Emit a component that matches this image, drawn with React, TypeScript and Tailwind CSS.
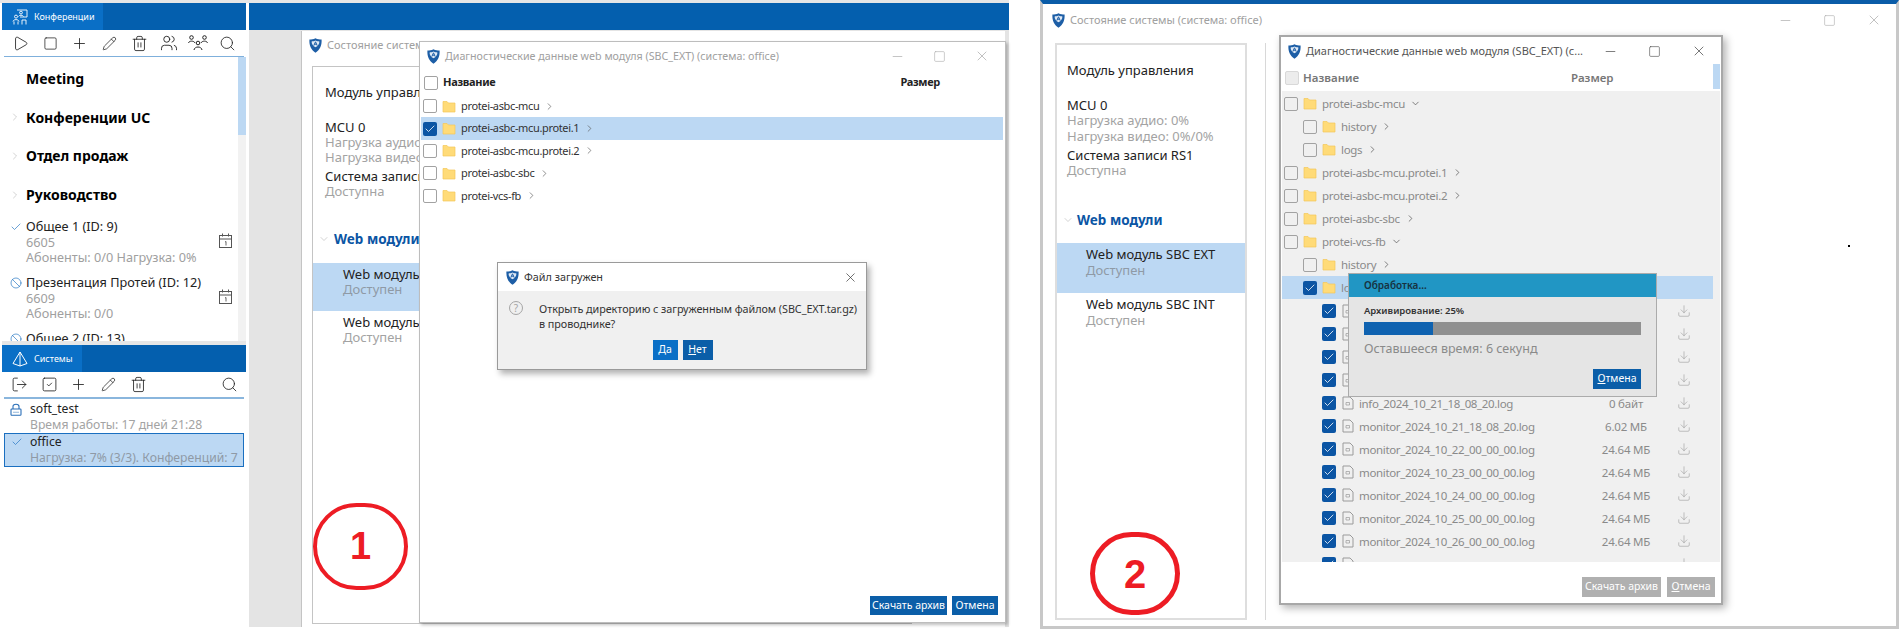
import React from "react";
import { Play, Square, Plus, Pencil, Trash2, Users, Search, Check, Ban, LogOut, SquareCheck, ChevronRight, ChevronDown, Minus, X, Download } from "lucide-react";

const Shield = () => (
  <svg width="13" height="15" viewBox="0 0 13 15" className="shrink-0">
    <path d="M6.5 0.3 C8.5 1.4 10.5 1.6 12.6 1.6 C12.9 7.5 11 12 6.5 14.7 C2 12 0.1 7.5 0.4 1.6 C2.5 1.6 4.5 1.4 6.5 0.3 Z" fill="#1d5ea6" />
    <path d="M6.5 2.6 C8 3.3 9.2 3.5 10.4 3.5 C10.5 6 9 8 6.5 9.2 C4 8 2.5 6 2.6 3.5 C3.8 3.5 5 3.3 6.5 2.6 Z" fill="#dfe9f5" />
    <path d="M4.8 7.6 L6.5 3.8 L8.2 7.6 M5.5 6.2 H7.5" stroke="#1d5ea6" strokeWidth="1" fill="none" />
  </svg>
);

const FolderIcon = () => (
  <svg width="14" height="13" viewBox="0 0 14 13" className="shrink-0">
    <path d="M1 1.5 H5 L6.5 3 H13 V12 H1 Z" fill="#ffdb78" stroke="#f3c75a" strokeWidth="0.7" />
  </svg>
);

const DocIcon = () => (
  <svg width="12" height="14" viewBox="0 0 12 14" fill="none" stroke="#9a9a9a" strokeWidth="1" className="shrink-0">
    <path d="M1 1 H8 L11 4 V13 H1 Z" />
    <path d="M4 6.5 H7.5 V9 H4 Z" strokeWidth="0.7" />
  </svg>
);

const CalendarIcon = () => (
  <svg width="13" height="15" viewBox="0 0 13 15" fill="none" stroke="#555" strokeWidth="1">
    <rect x="0.5" y="2.5" width="12" height="12" />
    <path d="M0.5 6 H12.5 M3.5 0.5 V3.5 M9.5 0.5 V3.5" />
    <path d="M6 9 L7 8.5 V12.5" strokeWidth="0.9" />
  </svg>
);

const ConferenceIcon = () => (
  <svg width="16" height="16" viewBox="0 0 16 16" fill="none" stroke="#fff" strokeWidth="0.9">
    <path d="M5 1 H15 V8 H8" />
    <circle cx="9" cy="3.6" r="1.4" />
    <path d="M6.5 7.5 C7 5.8 11 5.8 11.5 7.5" />
    <circle cx="4" cy="7.6" r="1.5" />
    <path d="M1 12.5 C1.3 10 6.7 10 7 12.5 M2 15.5 V12.5 M6 15.5 V12.5 M10 15.5 V11 H14 V15.5" />
  </svg>
);

const PyramidIcon = () => (
  <svg width="16" height="16" viewBox="0 0 16 16" fill="none" stroke="#fff" strokeWidth="1">
    <path d="M8 1 L15 12.5 L8 15 L1 12.5 Z M8 1 V15" />
  </svg>
);

const ThreePeopleIcon = () => (
  <svg width="20" height="16" viewBox="0 0 20 16" fill="none" stroke="#222" strokeWidth="1">
    <circle cx="3.5" cy="2.5" r="1.8" />
    <circle cx="16.5" cy="2.5" r="1.8" />
    <circle cx="10" cy="8" r="1.8" />
    <path d="M0.5 8 C1 5.5 6 5.5 7 8 M13 8 C14 5.5 19 5.5 19.5 8 M6 15 C6.5 11 13.5 11 14 15" />
  </svg>
);

const LockIcon = () => (
  <svg width="12" height="13" viewBox="0 0 12 13" fill="none" stroke="#2a6fb8" strokeWidth="1.1">
    <path d="M3 6 V3.5 C3 0.5 9 0.5 9 3.5 V6" />
    <rect x="1" y="6" width="10" height="6.3" rx="0.8" />
    <path d="M3.5 9.2 H4.5 M5.5 9.2 H6.5 M7.5 9.2 H8.5" />
  </svg>
);

const QuestionIcon = () => (
  <span className="flex size-[14px] shrink-0 items-center justify-center rounded-full border border-[#a5a5a5] text-[10px] leading-none text-[#a5a5a5]">?</span>
);

const Box = ({ checked, faint }: { checked?: boolean; faint?: boolean }) =>
  checked ? (
    <span className="flex size-[14px] shrink-0 items-center justify-center rounded-[2px] bg-[#0b55a4]">
      <Check size={12} color="#fff" strokeWidth={1.6} />
    </span>
  ) : (
    <span className={faint ? "size-[14px] shrink-0 rounded-[2px] border border-[#d8d8d8] bg-[#ececec]" : "size-[14px] shrink-0 rounded-[2px] border border-[#a2a2a2]"} />
  );

const TabBar = ({ icon, label, tab }: { icon: React.ReactNode; label: string; tab: string }) => (
  <div className="flex h-[27px] shrink-0 bg-[#045fae]">
    <div className={`flex items-center gap-[6px] pl-[10px] bg-[#0a6fc6] ${tab}`}>
      {icon}
      <span className="text-[9px] text-white">{label}</span>
    </div>
  </div>
);

const Tool = ({ children }: { children?: React.ReactNode }) => (
  <span className="flex w-[29.6px] items-center justify-center">{children}</span>
);

const GroupRow = ({ label, chevron }: { label: string; chevron?: boolean }) => (
  <div className="flex h-[38.8px] items-center">
    <span className="flex w-[24px] justify-center pl-[2px]">{chevron && <ChevronRight size={12} color="#b5b5b5" strokeWidth={1.2} />}</span>
    <span className="text-[14px] font-bold text-black">{label}</span>
  </div>
);

const ConfItem = ({ icon, title, num, stats }: { icon: React.ReactNode; title: string; num: string; stats: string }) => (
  <div className="flex h-[56px] items-start">
    <span className="flex h-[16px] w-[24px] items-center justify-center pl-[4px]">{icon}</span>
    <div className="flex-1 text-[12.7px] leading-[15.5px]">
      <div className="text-[#222]">{title}</div>
      <div className="text-[#a0a0a0]">{num}</div>
      <div className="text-[#a0a0a0]">{stats}</div>
    </div>
    <span className="mr-[6px] mt-[14px]"><CalendarIcon /></span>
  </div>
);

const StatusPanel = ({ big }: { big?: boolean }) => (
  <div className={big ? "h-[577px] w-[192px] shrink-0 border-2 border-[#dedede] pt-[18px] text-[13px] leading-[15.3px]" : "h-[558px] w-[600px] shrink-0 border border-[#c4c4c4] pt-[18px] text-[13px] leading-[15px]"}>
    <div className={big ? "pl-[10px]" : "pl-[12px]"}>
      <p className="h-[17px] text-[#222]">Модуль управления</p>
      <p className="mt-[18px] text-[#222]">MCU 0</p>
      <p className="text-[#a3a3a3]">Нагрузка аудио: 0%</p>
      <p className="text-[#a3a3a3]">Нагрузка видео: 0%/0%</p>
      <p className="mt-[4px] text-[#222]">Система записи RS1</p>
      <p className="text-[#a3a3a3]">Доступна</p>
    </div>
    <div className={big ? "mt-[32px] flex h-[20px] items-center gap-[3px] pl-[5px]" : "mt-[30px] flex h-[20px] items-center gap-[4px] pl-[5px]"}>
      <ChevronDown size={12} color="#b5b5b5" strokeWidth={1.2} />
      <span className="text-[13.5px] font-bold text-[#0b55a4]">Web модули</span>
    </div>
    <div className={big ? "mt-[13px] h-[50px] bg-[#bcd8f3] pl-[29px] pt-[4px]" : "mt-[14px] h-[48px] bg-[#bcd8f3] pl-[30px] pt-[4px]"}>
      <p className="text-[#222]">Web модуль SBC EXT</p>
      <p className="text-[#8f9aa6]">Доступен</p>
    </div>
    <div className={big ? "pl-[29px] pt-[4px]" : "pl-[30px] pt-[4px]"}>
      <p className="text-[#222]">Web модуль SBC INT</p>
      <p className="text-[#a3a3a3]">Доступен</p>
    </div>
  </div>
);

const WinControls = ({ color, gap }: { color: string; gap: string }) => (
  <div className={`ml-auto flex items-center ${gap}`}>
    <Minus size={15} color={color} strokeWidth={1.1} />
    <Square size={13} color={color} strokeWidth={1.1} />
    <X size={16} color={color} strokeWidth={1.1} />
  </div>
);

const Btn = ({ className, children }: { className: string; children: React.ReactNode }) => (
  <span className={`flex items-center justify-center text-[10.5px] text-white ${className}`}>{children}</span>
);

const RowA = ({ name, checked }: { name: string; checked?: boolean }) => (
  <div className={checked ? "ml-px mr-[2px] flex h-[22.4px] items-center gap-[5px] bg-[#bcd8f3] pl-[2px]" : "ml-px mr-[2px] flex h-[22.4px] items-center gap-[5px] pl-[2px]"}>
    <Box checked={checked} />
    <FolderIcon />
    <span className="text-[11px] tracking-[-0.35px] text-[#333]">{name}</span>
    <ChevronRight size={11} color="#555" strokeWidth={1.4} />
  </div>
);

const TreeRow = ({ level, name, open, checked }: { level: 0 | 1; name: string; open?: boolean; checked?: boolean }) => (
  <div className={`flex h-[23.05px] items-center gap-[5px] ${level === 0 ? "pl-[2px]" : "pl-[21px]"} ${checked ? "mr-[7px] bg-[#bcd8f3]" : ""}`}>
    <Box checked={checked} />
    <FolderIcon />
    <span className="text-[11.5px] tracking-[-0.3px] text-[#8a8a8a]">{name}</span>
    {open ? <ChevronDown size={11} color="#555" strokeWidth={1.6} /> : <ChevronRight size={11} color="#555" strokeWidth={1.6} />}
  </div>
);

const FileRow = ({ name, size }: { name?: string; size?: string }) => (
  <div className="flex h-[23.05px] items-center pl-[40px] pr-[18px]">
    <Box checked />
    <span className="ml-[6px]"><DocIcon /></span>
    <span className="ml-[5px] flex-1 text-[11.5px] tracking-[-0.35px] text-[#8a8a8a]">{name}</span>
    <span className="w-[80px] text-center text-[11.5px] tracking-[-0.2px] text-[#8a8a8a]">{size}</span>
    <span className="flex w-[36px] justify-center"><Download size={14} color="#9a9a9a" strokeWidth={1} /></span>
  </div>
);

const files: [string, string][] = [
  ["info_2024_10_21_18_08_20.log", "0 байт"],
  ["monitor_2024_10_21_18_08_20.log", "6.02 МБ"],
  ["monitor_2024_10_22_00_00_00.log", "24.64 МБ"],
  ["monitor_2024_10_23_00_00_00.log", "24.64 МБ"],
  ["monitor_2024_10_24_00_00_00.log", "24.64 МБ"],
  ["monitor_2024_10_25_00_00_00.log", "24.64 МБ"],
  ["monitor_2024_10_26_00_00_00.log", "24.64 МБ"],
];

export default function App() {
  return (
    <div className="flex h-[632px] w-[1902px] items-start overflow-hidden bg-white font-['Noto_Sans',sans-serif]">
      {/* first screenshot */}
      <section className="relative h-[627px] w-[1009px] shrink-0">
        <div className="h-[3px] bg-[#e6e6e6]" />
        <div className="flex h-[624px]">
          {/* sidebar */}
          <aside className="flex w-[246px] shrink-0 flex-col pl-[2px]">
            <TabBar icon={<ConferenceIcon />} label="Конференции" tab="w-[101px]" />
            <div className="mx-[2px] flex h-[27px] shrink-0 items-center border-b border-[#7fb0dc] pl-[2px] text-[#222]">
              <Tool><Play size={17} strokeWidth={1.2} /></Tool>
              <Tool><Square size={15} strokeWidth={1.2} /></Tool>
              <Tool><Plus size={17} strokeWidth={1.2} /></Tool>
              <Tool><Pencil size={15} strokeWidth={1.2} /></Tool>
              <Tool><Trash2 size={17} strokeWidth={1.2} /></Tool>
              <Tool><Users size={18} strokeWidth={1.2} /></Tool>
              <Tool><ThreePeopleIcon /></Tool>
              <Tool><Search size={17} strokeWidth={1.2} /></Tool>
            </div>
            <div className="flex h-[284px] shrink-0 overflow-hidden">
              <div className="flex-1 pt-[2px]">
                <GroupRow label="Meeting" />
                <GroupRow label="Конференции UC" chevron />
                <GroupRow label="Отдел продаж" chevron />
                <GroupRow label="Руководство" chevron />
                <div className="mt-[5px]">
                  <ConfItem icon={<Check size={12} color="#1a6fc0" strokeWidth={1.3} />} title="Общее 1 (ID: 9)" num="6605" stats="Абоненты: 0/0 Нагрузка: 0%" />
                  <ConfItem icon={<Ban size={12} color="#1a6fc0" strokeWidth={1.3} />} title="Презентация Протей (ID: 12)" num="6609" stats="Абоненты: 0/0" />
                  <ConfItem icon={<Ban size={12} color="#1a6fc0" strokeWidth={1.3} />} title="Общее 2 (ID: 13)" num="" stats="" />
                </div>
              </div>
              <div className="w-[8px] bg-[#f2f2f2]">
                <div className="h-[78px] bg-[#bcd8f3]" />
              </div>
            </div>
            <div className="h-[4px] shrink-0 bg-[#e6e6e6]" />
            <TabBar icon={<PyramidIcon />} label="Системы" tab="w-[80px]" />
            <div className="mx-[2px] flex h-[27px] shrink-0 items-center border-b-2 border-[#8ab6dd] pl-[1px] text-[#222]">
              <Tool><LogOut size={17} strokeWidth={1.2} /></Tool>
              <Tool><SquareCheck size={17} strokeWidth={1.2} /></Tool>
              <Tool><Plus size={17} strokeWidth={1.2} /></Tool>
              <Tool><Pencil size={15} strokeWidth={1.2} /></Tool>
              <Tool><Trash2 size={17} strokeWidth={1.2} /></Tool>
              <span className="ml-auto"><Tool><Search size={17} strokeWidth={1.2} /></Tool></span>
            </div>
            <div className="mx-[2px] pt-[2px] text-[12.2px] leading-[16px]">
              <div className="flex h-[16px] items-center">
                <span className="flex w-[26px] justify-center pr-[2px]"><LockIcon /></span>
                <span className="text-[#222]">soft_test</span>
              </div>
              <div className="h-[16px] whitespace-nowrap pl-[26px] text-[#a3a3a3]">Время работы: 17 дней 21:28</div>
              <div className="h-[34px] whitespace-nowrap border border-[#1a6fc0] bg-[#bcd8f3]">
                <div className="flex h-[16px] items-center">
                  <span className="flex w-[25px] justify-center pr-[2px]"><Check size={12} color="#1a6fc0" strokeWidth={1.3} /></span>
                  <span className="text-[#222]">office</span>
                </div>
                <div className="pl-[25px] text-[#8f9aa6]">Нагрузка: 7% (3/3). Конференций: 7</div>
              </div>
            </div>
          </aside>
          {/* desktop */}
          <div className="flex min-w-0 flex-1 flex-col pl-[3px]">
            <div className="h-[27px] shrink-0 bg-[#045fae]" />
            <div className="flex-1 bg-[#e4e4e4]" />
          </div>
        </div>

        {/* status window */}
        <div className="absolute left-[301px] top-[31px] flex h-[596px] w-[704px] flex-col border-l border-[#c4c4c4] bg-white pl-[10px]">
          <div className="-ml-[3px] flex h-[29px] items-center gap-[5px] whitespace-nowrap text-[11px] text-[#a0a0a0]">
            <Shield />
            <span>Состояние системы (система: office)</span>
          </div>
          <div className="mt-[6px]"><StatusPanel /></div>
        </div>

        {/* diagnostics window */}
        <div className="absolute left-[419px] top-[41px] flex h-[582px] w-[587px] flex-col border border-[#bdbdbd] bg-white shadow-[2px_2px_3px_rgba(0,0,0,0.25)]">
          <div className="flex h-[28px] shrink-0 items-center gap-[5px] pl-[7px] pr-[15px]">
            <Shield />
            <span className="whitespace-nowrap text-[10.7px] text-[#a0a0a0]">Диагностические данные web модуля (SBC_EXT) (система: office)</span>
            <WinControls color="#aaa" gap="gap-[28px]" />
          </div>
          <div className="flex h-[25px] shrink-0 items-center pl-[4px] text-[11px] font-bold tracking-[-0.3px] text-[#222]">
            <Box />
            <span className="ml-[5px]">Название</span>
            <span className="ml-auto mr-[65px]">Размер</span>
          </div>
          <RowA name="protei-asbc-mcu" />
          <RowA name="protei-asbc-mcu.protei.1" checked />
          <RowA name="protei-asbc-mcu.protei.2" />
          <RowA name="protei-asbc-sbc" />
          <RowA name="protei-vcs-fb" />
          <div className="mt-auto flex justify-end gap-[5px] pb-[7px] pr-[7px]">
            <Btn className="h-[19px] w-[77px] bg-[#0b5ea8]">Скачать архив</Btn>
            <Btn className="h-[19px] w-[46px] bg-[#0b5ea8]">Отмена</Btn>
          </div>
        </div>

        {/* file loaded dialog */}
        <div className="absolute left-[497px] top-[262px] flex h-[108px] w-[370px] flex-col border border-[#9a9a9a] bg-[#f0f0f0] shadow-[3px_4px_6px_rgba(0,0,0,0.3)]">
          <div className="flex h-[28px] shrink-0 items-center gap-[5px] bg-white pl-[8px] pr-[8px]">
            <Shield />
            <span className="text-[10.8px] text-[#333]">Файл загружен</span>
            <X size={15} color="#333" strokeWidth={1.1} className="ml-auto" />
          </div>
          <div className="flex pl-[11px] pt-[10px]">
            <QuestionIcon />
            <p className="ml-[16px] whitespace-nowrap text-[10.8px] leading-[15px] tracking-[-0.05px] text-[#333]">Открыть директорию с загруженным файлом (SBC_EXT.tar.gz)<br />в проводнике?</p>
          </div>
          <div className="mt-[9px] flex justify-center gap-[5px]">
            <Btn className="ml-[1px] h-[20px] w-[25px] bg-[#0a6fc6]"><span className="underline">Д</span>а</Btn>
            <Btn className="h-[20px] w-[30px] bg-[#0b5ea8]"><span className="underline">Н</span>ет</Btn>
          </div>
        </div>

        {/* annotation 1 */}
        <div className="absolute left-[313px] top-[503px] flex h-[87px] w-[95px] items-center justify-center rounded-full border-[4px] border-[#ed1c24] font-['Liberation_Sans',sans-serif] text-[38px] font-bold text-[#ed1c24]">1</div>
      </section>

      <div className="w-[31px] shrink-0" />

      {/* second screenshot */}
      <section className="relative flex h-[629px] w-[859px] shrink-0 flex-col border-x-[3px] border-b-[3px] border-t-[4px] border-x-[#c8c8c8] border-b-[#c8c8c8] border-t-[#0a5ca8]">
        <div className="flex h-[32px] shrink-0 items-center gap-[5px] pl-[9px] pr-[14px]">
          <Shield />
          <span className="whitespace-nowrap text-[11px] text-[#a0a0a0]">Состояние системы (система: office)</span>
          <WinControls color="#aaa" gap="gap-[30px]" />
        </div>
        <div className="mt-[7px] flex pl-[12px]">
          <StatusPanel big />
          <div className="ml-[18px] h-[577px] w-px bg-[#d8d8d8]" />
        </div>
        <span className="absolute left-[805px] top-[241px] size-[2px] bg-black" />

        {/* diagnostics window */}
        <div className="absolute left-[236px] top-[31px] flex h-[570px] w-[444px] flex-col border-2 border-[#a8a8a8] bg-white shadow-[3px_3px_8px_rgba(0,0,0,0.3)]">
          <div className="flex h-[28px] shrink-0 items-center gap-[5px] pl-[7px] pr-[14px]">
            <Shield />
            <span className="whitespace-nowrap text-[11px] text-[#555]">Диагностические данные web модуля (SBC_EXT) (с...</span>
            <WinControls color="#444" gap="gap-[30px]" />
          </div>
          <div className="flex h-[26px] shrink-0 items-center pl-[4px] text-[11.5px] font-semibold text-[#777]">
            <Box faint />
            <span className="ml-[4px]">Название</span>
            <span className="ml-[212px]">Размер</span>
          </div>
          <div className="mx-[1px] h-[471px] shrink-0 overflow-hidden bg-[#f0f0f0] pt-[1px]">
            <TreeRow level={0} name="protei-asbc-mcu" open />
            <TreeRow level={1} name="history" />
            <TreeRow level={1} name="logs" />
            <TreeRow level={0} name="protei-asbc-mcu.protei.1" />
            <TreeRow level={0} name="protei-asbc-mcu.protei.2" />
            <TreeRow level={0} name="protei-asbc-sbc" />
            <TreeRow level={0} name="protei-vcs-fb" open />
            <TreeRow level={1} name="history" />
            <TreeRow level={1} name="logs" checked />
            <FileRow />
            <FileRow />
            <FileRow />
            <FileRow />
            {files.map(([n, s]) => <FileRow key={n} name={n} size={s} />)}
            <FileRow />
          </div>
          <div className="mt-[15px] flex justify-end gap-[6px] pr-[6px]">
            <Btn className="h-[20px] w-[79px] bg-[#b0b0b0] text-[#e8e8e8]">Скачать архив</Btn>
            <Btn className="h-[20px] w-[48px] bg-[#b0b0b0] text-[#e8e8e8]"><span className="underline">О</span>тмена</Btn>
          </div>
          <div className="absolute right-[1px] top-[27px] h-[25px] w-[7px] bg-[#bcd8f3]" />

          {/* progress dialog */}
          <div className="absolute left-[67px] top-[236px] flex h-[124px] w-[309px] flex-col border border-[#ababab] bg-[#e5e5e5]">
            <div className="flex h-[23px] shrink-0 items-center bg-[#2196c4] pl-[15px] text-[10px] font-semibold text-[#17323f]">Обработка...</div>
            <div className="flex flex-1 flex-col px-[15px] pb-[7px] pt-[7px]">
              <p className="text-[9.5px] font-semibold leading-[14px] text-[#333]">Архивирование: 25%</p>
              <div className="mt-[4px] h-[13px] bg-[#909090]">
                <div className="h-full w-[25%] bg-[#0f62b0]" />
              </div>
              <p className="mt-[6px] text-[12.5px] leading-[16px] text-[#8a8a8a]">Оставшееся время: 6 секунд</p>
              <Btn className="ml-auto mt-auto h-[20px] w-[48px] bg-[#0b5ea8]"><span className="underline">О</span>тмена</Btn>
            </div>
          </div>
        </div>

        {/* annotation 2 */}
        <div className="absolute left-[47px] top-[528px] flex h-[83px] w-[90px] items-center justify-center rounded-full border-[5px] border-[#ed1c24] font-['Liberation_Sans',sans-serif] text-[40px] font-bold text-[#ed1c24]">2</div>
      </section>
    </div>
  );
}
